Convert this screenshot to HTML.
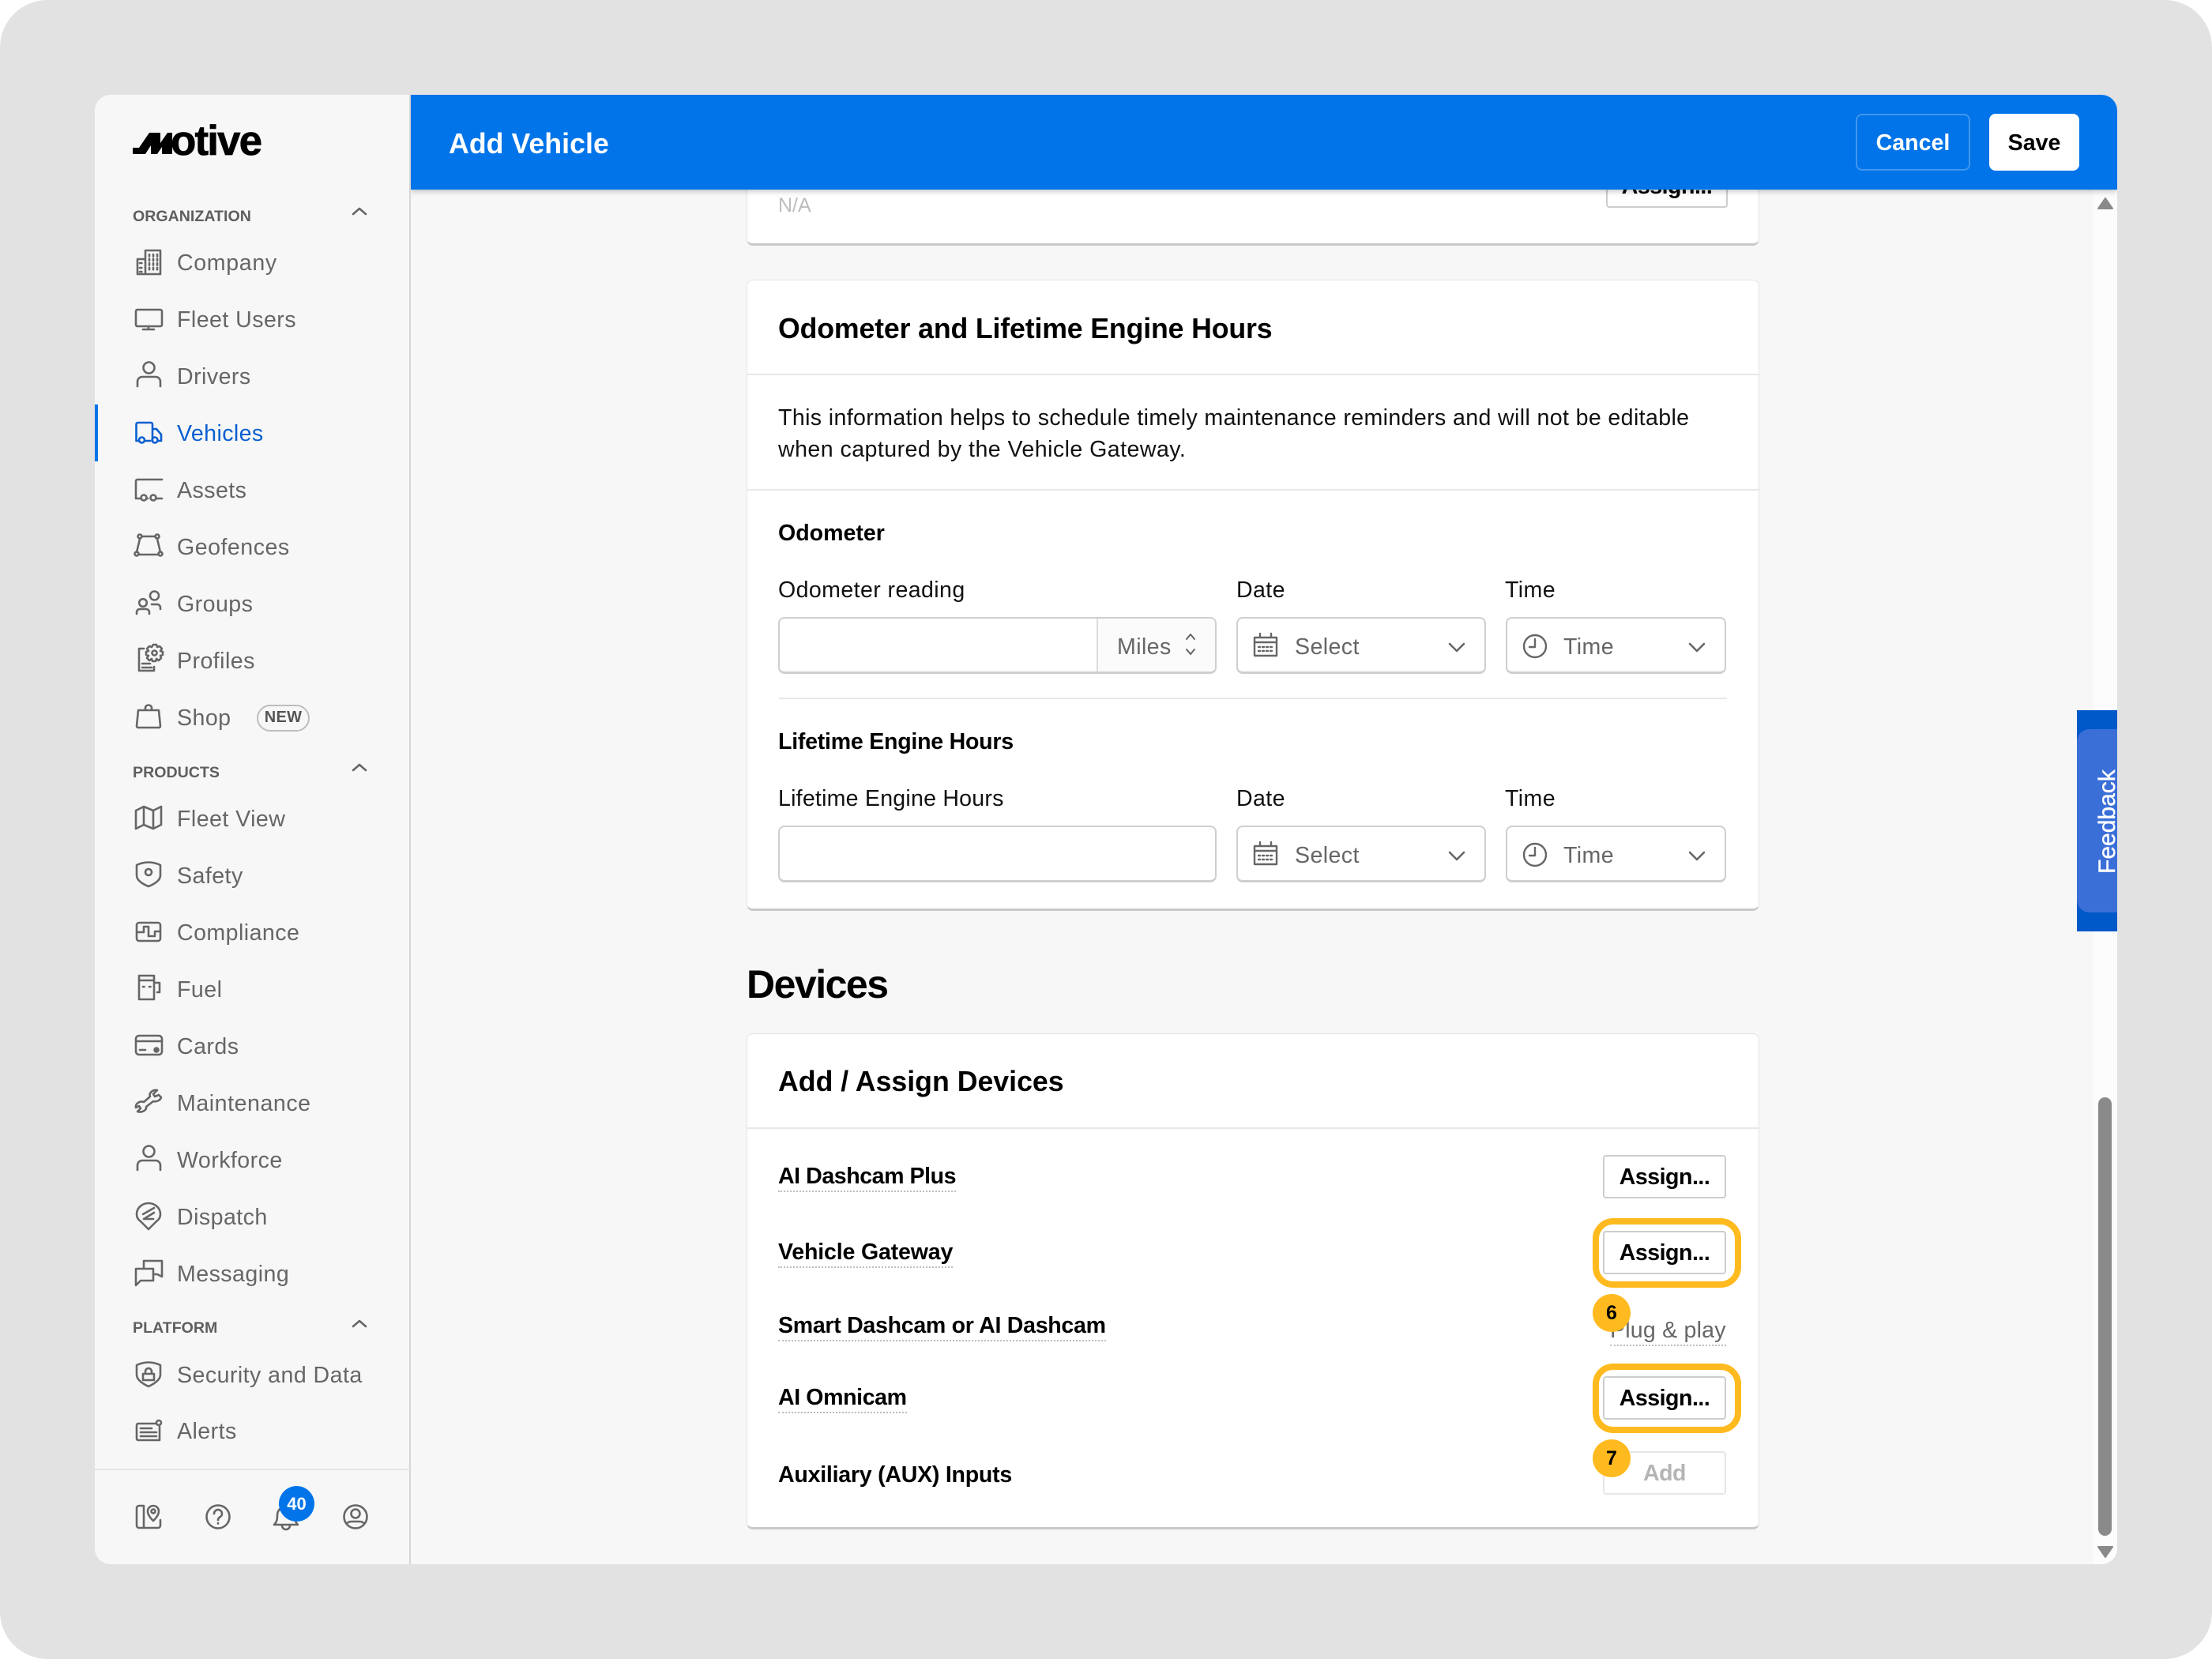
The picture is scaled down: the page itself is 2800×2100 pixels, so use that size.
<!DOCTYPE html>
<html><head><meta charset="utf-8"><title>Add Vehicle</title>
<style>
html,body{margin:0;padding:0;width:2800px;height:2100px;overflow:hidden;background:#fff}
*{box-sizing:border-box}
body{font-family:"Liberation Sans",sans-serif;position:relative}
#bg{position:absolute;left:0;top:0;width:2800px;height:2100px;background:#e2e2e2;border-radius:60px}
#frame{position:absolute;left:120px;top:120px;width:2560px;height:1860px;border-radius:20px;overflow:hidden;background:#f7f7f7}
.a{position:absolute}
.t{position:absolute;white-space:nowrap;line-height:40px;margin-top:-19px;font-size:28.57px;letter-spacing:.4px}
.nav{color:#666;left:104px;letter-spacing:.45px}
.sec{color:#5e5e5e;left:48px;font-size:19.6px;font-weight:bold;letter-spacing:0}
.b{font-weight:bold;color:#000;letter-spacing:0}
.k{color:#111}
.g{color:#666}
svg{position:absolute;overflow:visible;fill:none;stroke:#666;stroke-width:2.6;stroke-linejoin:round;stroke-linecap:round}
.ic{left:48px;width:40px;height:40px;margin-top:-20px}
.card{position:absolute;left:825px;width:1282px;background:#fff;border:1px solid #e4e4e4;border-bottom:3px solid #c9c9c9;border-radius:8px}
.inp{position:absolute;background:#fff;border:2px solid #cfcfcf;border-bottom-width:3px;border-radius:8px}
.hr{position:absolute;height:2px;background:#e8e8e8}
.btn{position:absolute;left:1909px;width:156px;height:55px;background:#fff;border:2px solid #cdcdcd;border-radius:4px;text-align:center;font-size:28.57px;font-weight:bold;line-height:53px;color:#000;letter-spacing:-.5px}
.hl{position:absolute;left:1896px;width:188px;height:88px;border:8px solid #ffba1f;border-radius:26px}
.dot{position:absolute;left:1896px;width:48px;height:48px;border-radius:50%;background:#ffba1f;color:#000;font-weight:bold;font-size:25px;text-align:center;line-height:48px}
.u{border-bottom:2px dotted #bdbdbd;line-height:36px;margin-top:-17px;height:38px}
</style></head><body>
<div id="bg"></div>
<div id="frame">

<!-- MAIN -->
<div class="a" style="left:400px;top:0;width:2160px;height:1860px;background:#f7f7f7"></div>
<div class="a" style="left:2530px;top:120px;width:30px;height:1740px;background:#fcfcfc"></div>

<!-- top partial card -->
<div class="card" style="top:60px;height:131px"></div>
<div class="t" style="left:865px;top:139px;color:#bdbdbd;font-size:25px;letter-spacing:0">N/A</div>
<div class="btn" style="left:1913px;width:154px;top:80px;height:63px;line-height:68px">Assign...</div>

<!-- Odometer card -->
<div class="card" style="top:234px;height:799px"></div>
<div class="t b" style="left:865px;top:295px;font-size:35.7px;letter-spacing:-.15px">Odometer and Lifetime Engine Hours</div>
<div class="hr" style="left:826px;width:1280px;top:353px"></div>
<div class="t k" style="left:865px;top:408px;letter-spacing:.37px">This information helps to schedule timely maintenance reminders and will not be editable</div>
<div class="t k" style="left:865px;top:448px;letter-spacing:.45px">when captured by the Vehicle Gateway.</div>
<div class="hr" style="left:826px;width:1280px;top:499px"></div>

<div class="t b" style="left:865px;top:554px">Odometer</div>
<div class="t k" style="left:865px;top:626px">Odometer reading</div>
<div class="t k" style="left:1445px;top:626px">Date</div>
<div class="t k" style="left:1785px;top:626px">Time</div>

<div class="inp" style="left:865px;top:661px;width:555px;height:72px;overflow:hidden"><div class="a" style="left:401px;top:0;width:154px;height:72px;background:#fbfbfb;border-left:2px solid #dcdcdc"></div></div>
<div class="t g" style="left:1294px;top:698px">Miles</div>
<svg style="left:1380px;top:680px;width:14px;height:36px;stroke-width:2"><path d="M2 9L7 3L12 9M2 22L7 28L12 22"/></svg>

<div class="inp" style="left:1445px;top:661px;width:316px;height:72px"></div>
<svg style="left:1466px;top:681px;width:32px;height:30px;stroke-width:2.4"><path d="M2 6H30V29H2ZM2 12H30M9 1V6M23 1V6"/><path stroke-dasharray="2 3" d="M7 18H26M7 23H26"/></svg>
<div class="t g" style="left:1519px;top:698px">Select</div>
<svg style="left:1713px;top:693px;width:22px;height:12px"><path d="M2 2L11 11L20 2"/></svg>

<div class="inp" style="left:1786px;top:661px;width:279px;height:72px"></div>
<svg style="left:1808px;top:683px;width:30px;height:30px;stroke-width:2.4"><circle cx="15" cy="15" r="14"/><path d="M15 6V16H8"/></svg>
<div class="t g" style="left:1859px;top:698px">Time</div>
<svg style="left:2017px;top:693px;width:22px;height:12px"><path d="M2 2L11 11L20 2"/></svg>

<div class="hr" style="left:866px;width:1200px;top:763px"></div>

<div class="t b" style="left:865px;top:818px;letter-spacing:-.25px">Lifetime Engine Hours</div>
<div class="t k" style="left:865px;top:890px;letter-spacing:.22px">Lifetime Engine Hours</div>
<div class="t k" style="left:1445px;top:890px">Date</div>
<div class="t k" style="left:1785px;top:890px">Time</div>

<div class="inp" style="left:865px;top:925px;width:555px;height:72px"></div>

<div class="inp" style="left:1445px;top:925px;width:316px;height:72px"></div>
<svg style="left:1466px;top:945px;width:32px;height:30px;stroke-width:2.4"><path d="M2 6H30V29H2ZM2 12H30M9 1V6M23 1V6"/><path stroke-dasharray="2 3" d="M7 18H26M7 23H26"/></svg>
<div class="t g" style="left:1519px;top:962px">Select</div>
<svg style="left:1713px;top:957px;width:22px;height:12px"><path d="M2 2L11 11L20 2"/></svg>

<div class="inp" style="left:1786px;top:925px;width:279px;height:72px"></div>
<svg style="left:1808px;top:947px;width:30px;height:30px;stroke-width:2.4"><circle cx="15" cy="15" r="14"/><path d="M15 6V16H8"/></svg>
<div class="t g" style="left:1859px;top:962px">Time</div>
<svg style="left:2017px;top:957px;width:22px;height:12px"><path d="M2 2L11 11L20 2"/></svg>

<!-- Devices -->
<div class="t b" style="left:825px;top:1126px;font-size:50px;letter-spacing:-1.5px;line-height:60px;margin-top:-30px">Devices</div>
<div class="card" style="top:1188px;height:628px"></div>
<div class="t b" style="left:865px;top:1248px;font-size:35.7px;">Add / Assign Devices</div>
<div class="hr" style="left:826px;width:1280px;top:1307px"></div>

<div class="t b u" style="left:865px;top:1368px;letter-spacing:-.45px">AI Dashcam Plus</div>
<div class="t b u" style="left:865px;top:1464px;letter-spacing:-.18px">Vehicle Gateway</div>
<div class="t b u" style="left:865px;top:1557px;letter-spacing:-.3px">Smart Dashcam or AI Dashcam</div>
<div class="t b u" style="left:865px;top:1648px;letter-spacing:-.4px">AI Omnicam</div>
<div class="t b" style="left:865px;top:1746px;letter-spacing:-.25px">Auxiliary (AUX) Inputs</div>

<div class="btn" style="top:1342px">Assign...</div>
<div class="btn" style="top:1438px">Assign...</div>
<div class="t g u" style="left:1918px;top:1563px;letter-spacing:.2px">Plug &amp; play</div>
<div class="btn" style="top:1622px">Assign...</div>
<div class="btn" style="top:1717px;border-color:#e6e6e6;color:#b5b5b5">Add</div>

<div class="hl" style="top:1422px"></div>
<div class="hl" style="top:1606px"></div>
<div class="dot" style="top:1518px">6</div>
<div class="dot" style="top:1702px">7</div>

<!-- scrollbar -->
<svg style="left:2535px;top:130px;width:20px;height:15px;fill:#8a8a8a;stroke:#8a8a8a;stroke-width:2"><path d="M10 1L19 14H1Z"/></svg>
<div class="a" style="left:2536px;top:1269px;width:17px;height:555px;border-radius:9px;background:#8a8a8a"></div>
<svg style="left:2535px;top:1837px;width:20px;height:15px;fill:#8a8a8a;stroke:#8a8a8a;stroke-width:2"><path d="M1 1H19L10 14Z"/></svg>

<!-- feedback -->
<div class="a" style="left:2509px;top:779px;width:51px;height:280px;background:#0059c9;overflow:hidden">
  <div class="a" style="left:0;top:24px;width:60px;height:232px;background:#3b6fd8;border-radius:16px 0 0 16px"></div>
  <div class="a" style="left:-26px;top:122px;width:130px;height:40px;transform:rotate(-90deg);transform-origin:center;color:#fff;font-size:30px;line-height:40px;text-align:center;white-space:nowrap;letter-spacing:0;-webkit-text-stroke:.4px #fff">Feedback</div>
</div>

<!-- HEADER -->
<div class="a" style="left:400px;top:0;width:2160px;height:120px;background:#0074e8;box-shadow:0 2px 7px rgba(0,0,0,.25)"></div>
<div class="t b" style="left:448px;top:61px;color:#fff;font-size:35.7px;letter-spacing:.05px">Add Vehicle</div>
<div class="a" style="left:2229px;top:24px;width:145px;height:72px;border:2px solid rgba(255,255,255,.25);border-radius:8px;color:#fff;font-weight:bold;font-size:28.57px;text-align:center;line-height:70px">Cancel</div>
<div class="a" style="left:2398px;top:24px;width:114px;height:72px;background:#fff;border-radius:8px;color:#000;font-weight:bold;font-size:28.57px;text-align:center;line-height:74px">Save</div>

<!-- SIDEBAR -->
<div class="a" style="left:0;top:0;width:400px;height:1860px;background:#f7f7f7;border-right:2px solid #d6d6d6"></div>
<svg style="left:0;top:0;width:220px;height:90px;fill:#000;stroke:none" viewBox="120 120 220 90"><path d="M168 195V187H176L189 168H203V181L212 168H218V195H205V186L199 195H191V184L184 195Z"/></svg>
<div class="t" style="left:96px;top:59px;color:#000;font-weight:bold;font-size:53px;letter-spacing:-1.9px;line-height:60px;margin-top:-30px;-webkit-text-stroke:.7px #000">otive</div>

<div class="t sec" style="top:153px">ORGANIZATION</div>
<svg style="left:325px;top:142px;width:20px;height:11px"><path d="M2 9L10 2L18 9"/></svg>

<svg class="ic" style="top:212px"><path d="M6 35V16H16V5H35V35ZM16 16V35"/><path stroke-dasharray="2.4 3.2" d="M21 10V32M26 10V32M31 10V32M9 21H13M9 27H13M9 32H13"/></svg>
<div class="t nav" style="top:212px;letter-spacing:.65px">Company</div>
<svg class="ic" style="top:284px"><rect x="4" y="8" width="33" height="21" rx="2"/><path d="M13 33H27M20 29V33"/></svg>
<div class="t nav" style="top:284px">Fleet Users</div>
<svg class="ic" style="top:356px"><circle cx="20.500" cy="9.500" r="7"/><path d="M6 33V27a6 6 0 0 1 6-6H29a6 6 0 0 1 6 6V33"/></svg>
<div class="t nav" style="top:356px">Drivers</div>

<div class="a" style="left:0;top:392px;width:3.500px;height:72px;background:#0074e8"></div>
<svg class="ic" style="top:428px;stroke:#0a5fd0"><path d="M8 30H4.500V9a2 2 0 0 1 2-2H23a2 2 0 0 1 2 2V30M15 30H22M25 15H30L36 22V30H32"/><circle cx="11.500" cy="29" r="3.500"/><circle cx="28" cy="29" r="3.500"/></svg>
<div class="t" style="left:104px;top:428px;color:#0a5fd0">Vehicles</div>

<svg class="ic" style="top:500px"><path d="M37 7H6a2 2 0 0 0-2 2V31H10M30 31H37M18 31H19"/><circle cx="14" cy="30" r="3.500"/><circle cx="26" cy="30" r="3.500"/></svg>
<div class="t nav" style="top:500px">Assets</div>
<svg class="ic" style="top:572px"><path d="M11 7H29M31 10L35 27M33 30H7M5 27L9 10"/><circle cx="9" cy="7" r="2.500"/><circle cx="31" cy="7" r="2.500"/><circle cx="5" cy="29" r="2.500"/><circle cx="35" cy="29" r="2.500"/></svg>
<div class="t nav" style="top:572px;letter-spacing:.5px">Geofences</div>
<svg class="ic" style="top:644px"><circle cx="27.500" cy="10" r="5.500"/><circle cx="13" cy="19" r="4.800"/><path d="M5 33V31a4 4 0 0 1 4-4H17a4 4 0 0 1 4 4V33M24 21H31a4 4 0 0 1 4 4V27"/></svg>
<div class="t nav" style="top:644px">Groups</div>
<svg class="ic" style="top:716px"><path d="M14 5H8V33H27V28M12 24H22M12 29H24"/><circle cx="27.500" cy="10.500" r="3"/><path transform="translate(1,-2)" d="M25 2h4l1 3 3-1 3 3-2 3 3 1v4l-3 1 1 3-3 3-3-2-1 3h-4l-1-3-3 2-3-3 2-3-3-1v-4l3-1-2-3 3-3 3 1z"/></svg>
<div class="t nav" style="top:716px">Profiles</div>
<svg class="ic" style="top:788px"><path d="M7 11H33L35 31a2 2 0 0 1-2 2H7a2 2 0 0 1-2-2ZM16 11V8a4 3.500 0 0 1 8 0V11"/></svg>
<div class="t nav" style="top:788px">Shop</div>
<div class="a" style="left:205px;top:772px;width:67px;height:34px;border:2px solid #bdbdbd;border-radius:17px;color:#555;font-weight:bold;font-size:20px;text-align:center;line-height:28px;letter-spacing:.3px">NEW</div>

<div class="t sec" style="top:857px">PRODUCTS</div>
<svg style="left:325px;top:846px;width:20px;height:11px"><path d="M2 9L10 2L18 9"/></svg>

<svg class="ic" style="top:916px"><path d="M4 10L14 5L26 10L36 5V28L26 33L14 28L4 33ZM14 5V28M26 10V33"/></svg>
<div class="t nav" style="top:916px">Fleet View</div>
<svg class="ic" style="top:988px"><path d="M5 7Q20 0 35 7V20Q35 28 20 34Q5 28 5 20Z"/><circle cx="20" cy="16" r="4"/></svg>
<div class="t nav" style="top:988px">Safety</div>
<svg class="ic" style="top:1060px"><rect x="5" y="8" width="30" height="23" rx="3"/><path d="M5 20H14V13H20V25H28V19H35"/></svg>
<div class="t nav" style="top:1060px">Compliance</div>
<svg class="ic" style="top:1132px"><path d="M8 3H27V33H8ZM8 9H27M27 12H34V24H31"/><path d="M13 17H14.500M21 17H22.500"/></svg>
<div class="t nav" style="top:1132px">Fuel</div>
<svg class="ic" style="top:1204px"><rect x="4" y="7" width="33" height="24" rx="4"/><path d="M4 14H37M9 25H16"/><circle cx="30" cy="25" r="2.500" fill="#666"/></svg>
<div class="t nav" style="top:1204px">Cards</div>
<svg class="ic" style="top:1276px"><path d="M31 4L26 9L28 12L33 10L36 13C35 17 30 19 26 18L17 25C18 29 12 33 6 31L10 27L8 24L4 26C3 21 9 17 14 19L22 12C20 7 26 3 31 4Z"/></svg>
<div class="t nav" style="top:1276px;letter-spacing:.55px">Maintenance</div>
<svg class="ic" style="top:1348px"><circle cx="20.500" cy="9.500" r="7"/><path d="M6 33V27a6 6 0 0 1 6-6H29a6 6 0 0 1 6 6V33"/></svg>
<div class="t nav" style="top:1348px">Workforce</div>
<svg class="ic" style="top:1420px"><path d="M5 17C5 8 13 3 20 3S35 8 35 17C35 21 33 24 30 26L20 36L10 26C7 24 5 21 5 17Z"/><path d="M13 17L27 9M27 15L14 23H26"/></svg>
<div class="t nav" style="top:1420px">Dispatch</div>
<svg class="ic" style="top:1492px"><path d="M14 14V4H37V24L31 21H26"/><path d="M4 14H26V29H10L4 35Z"/></svg>
<div class="t nav" style="top:1492px">Messaging</div>

<div class="t sec" style="top:1560px">PLATFORM</div>
<svg style="left:325px;top:1550px;width:20px;height:11px"><path d="M2 9L10 2L18 9"/></svg>

<svg class="ic" style="top:1620px"><path d="M5 8Q20 1 35 8V20Q35 28 20 35Q5 28 5 20Z"/><path d="M13 19H27V27H13ZM16 19V16a4 4 0 0 1 8 0V19"/></svg>
<div class="t nav" style="top:1620px">Security and Data</div>
<svg class="ic" style="top:1691px"><path d="M29 11H7a2 2 0 0 0-2 2V30a2 2 0 0 0 2 2H34V15M10 17H24M10 22H30M10 27H30"/><circle cx="33" cy="10" r="3"/></svg>
<div class="t nav" style="top:1691px">Alerts</div>

<div class="a" style="left:0;top:1739px;width:399px;height:2px;background:#e4e4e4"></div>

<svg class="ic" style="top:1800px;width:40px"><path d="M14 6H8a3 3 0 0 0-3 3V31a3 3 0 0 0 3 3H32a3 3 0 0 0 3-3V24M14 6V34"/><path d="M33 14C33 20 26 26 26 26S19 20 19 14a7 7 0 0 1 14 0Z" transform="translate(0,-1)"/><circle cx="26" cy="13" r="2.500"/></svg>
<svg class="ic" style="left:136px;top:1800px"><circle cx="20" cy="20" r="14.500"/><path d="M15 16a5 5 0 1 1 7.500 4.300C21 21.200 20 22 20 24M20 28V28.500"/></svg>
<svg class="ic" style="left:222px;top:1800px"><path d="M5 30C8 27 9 24 9 18a11 11 0 0 1 22 0C31 24 32 27 35 30ZM15 31a5 5 0 0 0 10 0"/></svg>
<div class="a" style="left:233px;top:1761px;width:45px;height:45px;border-radius:50%;background:#0074e8;color:#fff;font-weight:bold;font-size:22px;text-align:center;line-height:45px">40</div>
<svg class="ic" style="left:310px;top:1800px"><circle cx="20" cy="20" r="14.500"/><circle cx="20" cy="16" r="5.500"/><path d="M9 29C10 27 12 26 15 26H25C28 26 30 27 31 29"/></svg>

</div>
</body></html>
